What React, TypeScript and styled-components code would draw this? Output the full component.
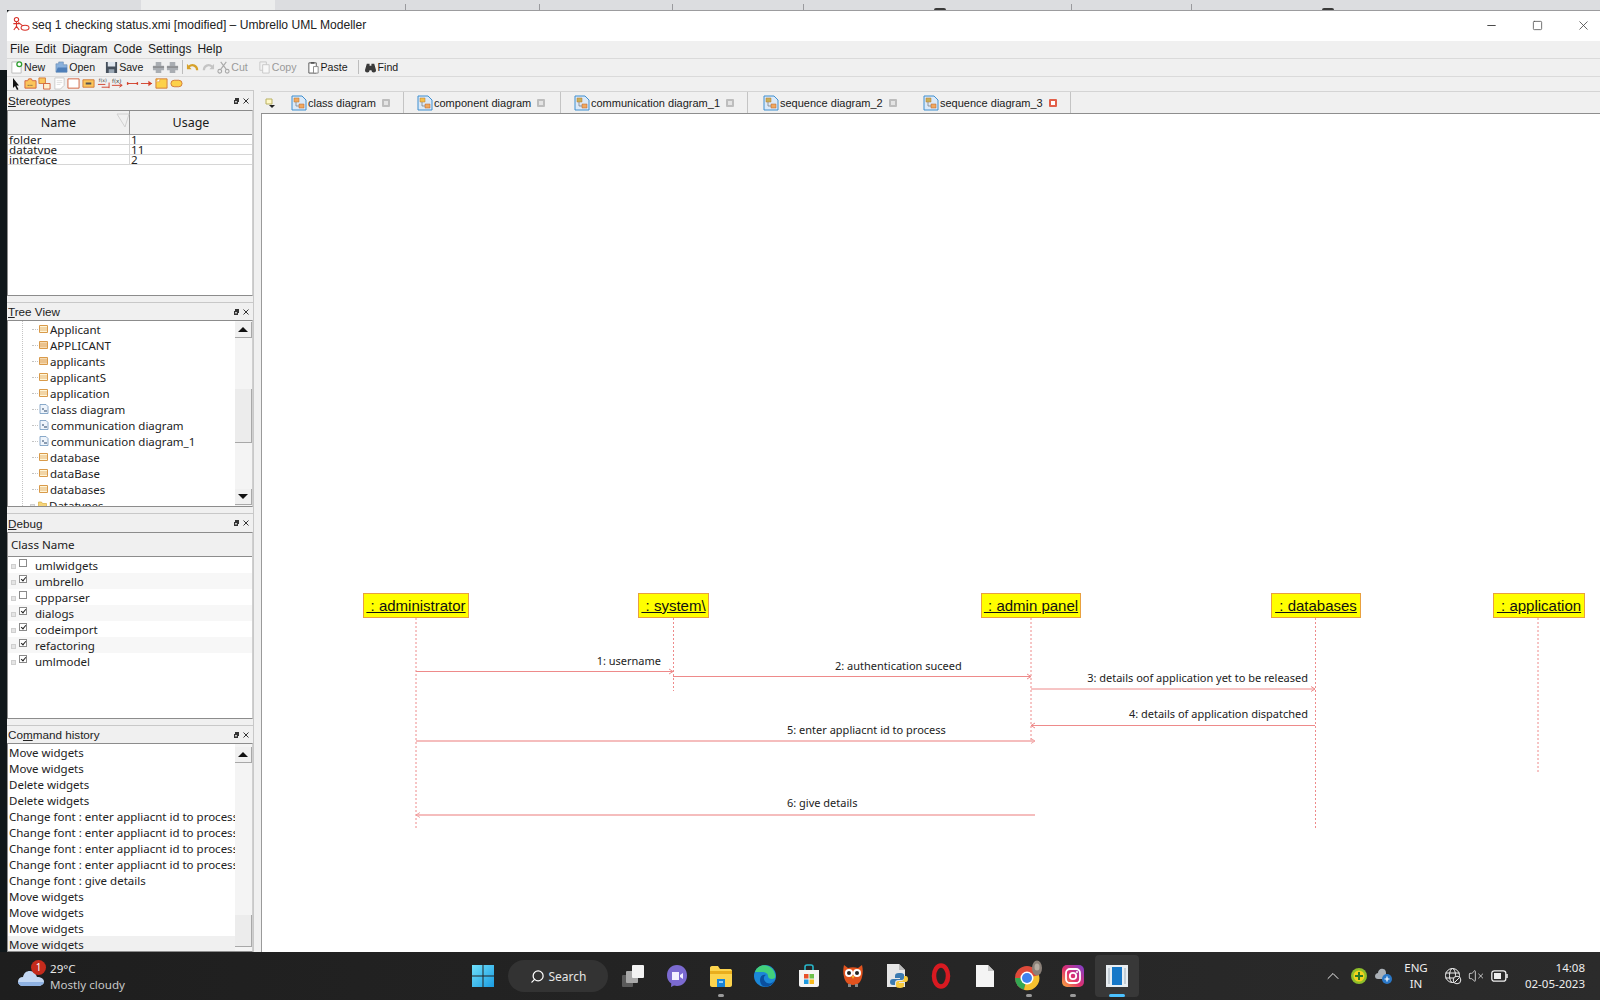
import React from "react";
import styled, { createGlobalStyle } from "styled-components";
import { ChevronUp, VolumeX, Search, Minus, Square, X } from "lucide-react";

const UI = `"Noto Sans", "DejaVu Sans", sans-serif`;
const NARROW = `"Liberation Sans", Arial, sans-serif`;

const Global = createGlobalStyle`
  html, body { margin: 0; padding: 0; background: #10171a; }
  * { box-sizing: border-box; }
`;

const Page = styled.div`
  width: 1600px; height: 1000px; display: flex; flex-direction: column;
  overflow: hidden; font-family: ${UI}; font-size: 12px; color: #1a1a1a;
`;
const BackStrip = styled.div`
  height: 10px; flex: none; background: #dcdde0; display: flex; align-items: flex-end;
`;
const Bump = styled.div`
  width: 134px; height: 10px; margin-left: 141px; background: #eceded;
`;
const Tick = styled.i<{ $ml: number; $dark?: boolean }>`
  display: block; margin-left: ${p => p.$ml}px;
  width: ${p => (p.$dark ? 12 : 1)}px; height: ${p => (p.$dark ? 2 : 6)}px;
  background: ${p => (p.$dark ? "#3a3a3a" : "#9a9a9e")};
  border-radius: ${p => (p.$dark ? "6px 6px 0 0" : 0)};
`;
const Middle = styled.div`display: flex; flex: 1; min-height: 0;`;
const Gutter = styled.div`
  width: 7px; flex: none; background: linear-gradient(#dcdde0 0 60px, #10171a 60px);
`;
const Win = styled.div`
  flex: 1; min-width: 0; display: flex; flex-direction: column; background: #f0f0f0;
  border-top: 1px solid #9c9c9e; border-top-left-radius: 4px; overflow: hidden;
`;
const TitleBar = styled.div`
  height: 30px; flex: none; background: #fff; display: flex; align-items: center; padding: 0 0 2px 5px;
`;
const TitleText = styled.span`font: 12.1px ${NARROW}; margin-left: 2px; color: #222; white-space: nowrap;`;
const WinControls = styled.div`margin-left: auto; margin-right: -6px; display: flex; align-items: center; color: #333;`;
const WinBtn = styled.span`width: 46px; display: flex; justify-content: center; align-items: center;`;
const MenuBar = styled.div`
  height: 18px; flex: none; display: flex; align-items: center; padding: 0 0 1px 3px; gap: 6px;
  border-bottom: 1px solid #dadada; font: 12px ${NARROW}; white-space: nowrap;
`;
const MainTools = styled.div`
  height: 18px; flex: none; display: flex; align-items: center; padding: 0 0 1px 3px;
  border-bottom: 1px solid #dadada; font: 10.6px ${NARROW}; white-space: nowrap;
`;
const Tool = styled.span<{ $ml?: number; $off?: boolean }>`
  display: flex; align-items: center; gap: 1px; margin-left: ${p => p.$ml ?? 0}px;
  color: ${p => (p.$off ? "#9a9a9a" : "#1a1a1a")};
`;
const Sep = styled.i<{ $ml: number }>`
  display: block; width: 1px; height: 14px; background: #bdbdbd; margin-left: ${p => p.$ml}px;
`;
const ShapeTools = styled.div`
  height: 13px; flex: none; display: flex; align-items: center; padding-left: 5px; gap: 1.6px;
  > :first-child { margin-right: 2px; }
`;
const Work = styled.div`flex: 1; min-height: 0; display: flex;`;
const Dock = styled.div`width: 246px; flex: none; display: flex; flex-direction: column;`;
const Panel = styled.section<{ $h: number }>`
  height: ${p => p.$h}px; flex: none; display: flex; flex-direction: column; overflow: hidden;
`;
const PanelTitle = styled.div<{ $h: number }>`
  height: ${p => p.$h}px; flex: none; display: flex; align-items: center; padding-left: 1px;
  border-top: 1px solid #c8c8c8; font: 11.7px ${NARROW}; color: #222;
  u { text-underline-offset: 1px; }
`;
const PanelIcons = styled.span`
  margin-left: auto; display: flex; gap: 4px; padding-right: 4px; align-items: center;
`;
const White = styled.div<{ $h?: number; $mb?: number }>`
  background: #fff; border: 1px solid #8c8c8c; border-right-color: #cfcfcf;
  width: 246px; position: relative; overflow: hidden;
  ${p => (p.$h ? `height: ${p.$h}px; flex: none;` : "flex: 1;")}
  margin-bottom: ${p => p.$mb ?? 0}px;
`;
const THead = styled.div`
  display: grid; grid-template-columns: 121px 1fr; height: 24px; background: #f0f0f0;
  border-bottom: 1px solid #9a9a9a; text-align: center; line-height: 24px; font-size: 12.5px;
  position: relative;
  > span:first-child { padding-right: 20px; }
  > span + span { border-left: 1px solid #9a9a9a; }
`;
const SortMark = styled.svg`position: absolute; left: 108px; top: 2px;`;
const TRow = styled.div`
  display: grid; grid-template-columns: 121px 1fr; height: 10px; overflow: hidden;
  border-bottom: 1px solid #d6d6d6; line-height: 10px; font-size: 11.6px; color: #222;
  > span { padding-left: 1px; height: 9px; overflow: hidden; }
  > span + span { border-left: 1px solid #d6d6d6; padding-left: 1px; }
`;
const ListRow = styled.div<{ $pl: number; $alt?: boolean; $sel?: boolean }>`
  height: 16px; display: flex; align-items: center; padding-left: ${p => p.$pl}px; white-space: nowrap;
  font-size: 11.5px; color: #222;
  background: ${p => (p.$sel ? "#f0f0f0" : p.$alt ? "#f7f7f7" : "transparent")};
`;
const ListBody = styled.div`width: 228px; overflow: hidden; height: 100%;`;
const Scroll = styled.div`
  position: absolute; top: 0; right: 0; bottom: 0; width: 17px; background: #f4f4f4;
  display: flex; flex-direction: column;
`;
const ScrollBtn = styled.div<{ $mt?: number }>`
  height: 16px; flex: none; margin-top: ${p => p.$mt ?? 0}px; background: #f0f0f0;
  border-bottom: 1px solid #a8a8a8; border-right: 1px solid #a8a8a8;
  display: flex; align-items: center; justify-content: center;
`;
const Thumb = styled.div<{ $top: number; $h: number }>`
  flex: none; margin-top: ${p => p.$top}px; height: ${p => p.$h}px; background: #ececec;
  border-bottom: 1px solid #a8a8a8; border-right: 1px solid #a8a8a8;
`;
const Arrow = styled.i<{ $down?: boolean }>`
  display: block; width: 0; height: 0; border-left: 5px solid transparent; border-right: 5px solid transparent;
  ${p => (p.$down ? "border-top: 5px solid #111;" : "border-bottom: 5px solid #111;")}
`;
const TreeGuide = styled.i`
  position: absolute; left: 14px; top: 0; bottom: 0; width: 0; border-left: 1px dotted #c4c4c4;
`;
const Stub = styled.i`display: block; width: 6px; border-top: 1px dotted #c4c4c4; margin-right: 1px;`;
const RowIcon = styled.span`display: flex; margin-right: 2px;`;
const Expander = styled.i`
  display: block; width: 5px; height: 5px; background: #e4e4e4; border: 1px solid #cfcfcf; margin-right: 3px; margin-top: 2px;
`;
const Check = styled.i<{ $on?: boolean }>`
  display: block; width: 8px; height: 8px; border: 1px solid #8a8a8a; margin-right: 8px; margin-top: -4px;
  background: #fff; position: relative;
  ${p => p.$on && `
    &::after {
      content: ""; position: absolute; left: 1.5px; top: 0; width: 2px; height: 4px;
      border: solid #222; border-width: 0 1.3px 1.3px 0; transform: rotate(40deg);
    }
  `}
`;
const ColHead = styled.div`
  height: 24px; flex: none; background: #f0f0f0; border-bottom: 1px solid #8c8c8c;
  padding-left: 3px; line-height: 24px; font-size: 11.6px;
`;
const Splitter = styled.div`
  width: 8px; flex: none; border-left: 1px solid #c8c8c8;
`;
const Editor = styled.div`flex: 1; min-width: 0; display: flex; flex-direction: column;`;
const TabBar = styled.div`
  height: 23px; flex: none; display: flex; align-items: center; border-top: 1px solid #d4d4d4;
  border-bottom: 1px solid #8e8e8e; margin-top: 1px; font: 11px ${NARROW}; white-space: nowrap;
`;
const NewTab = styled.span`width: 28px; flex: none; padding-left: 4px; display: flex;`;
const TabItem = styled.div<{ $w: number; $sep?: boolean }>`
  width: ${p => p.$w}px; flex: none; height: 100%; display: flex; align-items: center; gap: 1px;
  border-right: ${p => (p.$sep ? "1px solid #c4c4c4" : "none")};
`;
const TabClose = styled.i<{ $on?: boolean }>`
  display: block; width: 8px; height: 8px; margin-left: 5px; border-radius: 1px;
  background: ${p => (p.$on ? "#fff" : "#e4e4e4")};
  border: ${p => (p.$on ? "2px solid #e2604a" : "2px solid #bdbdbd")};
`;
const TabLead = styled.i<{ $w: number }>`display: block; width: ${p => p.$w}px; flex: none;`;
const Canvas = styled.div`
  flex: 1; position: relative; background: #fff; border-left: 1px solid #9a9a9a; overflow: hidden;
`;
const CanvasLines = styled.svg`position: absolute; left: 0; top: 0; width: 100%; height: 100%;`;
const OX = 262, OY = 114;
const ObjBox = styled.div<{ $x: number; $w: number }>`
  position: absolute; left: ${p => p.$x - OX}px; top: ${593 - OY}px; width: ${p => p.$w}px; height: 25px;
  background: #ffff00; border: 1px solid #e8a040; display: flex; align-items: center; justify-content: center;
  font: 15px/1 "Liberation Sans", Arial, sans-serif; color: #111; text-decoration: underline; white-space: pre;
`;
const MsgLabel = styled.span<{ $x: number; $y: number; $right?: boolean }>`
  position: absolute; top: ${p => p.$y - OY - 8}px; line-height: 16px; font-size: 11px; color: #222; white-space: nowrap;
  ${p => (p.$right ? `right: ${1600 - p.$x}px;` : `left: ${p.$x - OX}px;`)}
`;

const Taskbar = styled.footer`
  height: 48px; flex: none; background: linear-gradient(90deg, #1e1e1e, #262626 60%, #2b2b2b);
  display: flex; align-items: center; color: #eee; position: relative; font-family: ${UI};
`;
const Weather = styled.div`width: 461px; flex: none; display: flex; align-items: center; padding-left: 18px; gap: 6px; position: relative;`;
const Badge = styled.span`
  position: absolute; left: 31px; top: 0; width: 15px; height: 15px; border-radius: 50%; background: #c42b1c;
  font-size: 10px; line-height: 15px; text-align: center; color: #fff;
`;
const WeatherText = styled.div`font-size: 11.6px; line-height: 16px; padding-top: 1px; display: flex; flex-direction: column; color: #e8e8e8; & > span + span { color: #c8c8c8; }`;
const Slot = styled.div<{ $active?: boolean }>`
  width: 44px; height: 42px; flex: none; display: flex; align-items: center; justify-content: center;
  position: relative; border-radius: 4px;
  background: ${p => (p.$active ? "#383838" : "transparent")};
`;
const Dot = styled.i<{ $wide?: boolean }>`
  position: absolute; bottom: 0; left: 50%; transform: translateX(-50%);
  width: ${p => (p.$wide ? 16 : 6)}px; height: 3px; border-radius: 2px;
  background: ${p => (p.$wide ? "#4cc2ff" : "#9a9a9a")};
`;
const SearchPill = styled.div`
  width: 100px; height: 32px; margin: 0 3px; flex: none; border-radius: 16px; background: #333;
  display: flex; align-items: center; justify-content: center; gap: 4px; font-size: 12px; color: #e6e6e6;
`;
const Tray = styled.div`margin-left: auto; display: flex; align-items: center; padding-right: 15px;`;
const TrayIcon = styled.span<{ $w: number }>`width: ${p => p.$w}px; display: flex; justify-content: center;`;
const Lang = styled.div`width: 34px; margin: 0 8px 0 3px; text-align: center; font-size: 11.5px; line-height: 16px;`;
const Clock = styled.div`width: 72px; text-align: right; font-size: 11.5px; line-height: 16px; margin-left: 1px;`;

/* ---------- small app icons ---------- */
const S = ({ w = 13, h = 13, vb = "0 0 14 14", children }: any) => (
  <svg width={w} height={h} viewBox={vb} style={{ flex: "none", display: "block" }}>{children}</svg>
);
const AppLogo = () => (
  <svg width={18} height={18} viewBox="0 0 20 20" style={{ flex: "none" }}>
    <g fill="none" stroke="#d8322a" strokeWidth="1.2">
      <circle cx="5" cy="4" r="2.4" />
      <path d="M5 6.5v5M1.5 8.5h7M5 11.5l-3 4M5 11.5l3 4M7 7l5 4" />
      <ellipse cx="14.5" cy="13" rx="4.4" ry="2.8" />
    </g>
  </svg>
);
const NewIc = () => <S><path d="M2 1h7l3 3v9H2z" fill="#fff" stroke="#bbb" /><circle cx="10" cy="3.5" r="2.6" fill="#fff" stroke="#2f9e2f" strokeWidth="1.4" /></S>;
const OpenIc = () => <S><path d="M1 12V3h3V1h5v3h4v8z" fill="#8ab1dc" stroke="#6084ad" strokeWidth=".6" /><path d="M1 12l2-5h10v5z" fill="#4f7fb9" /></S>;
const SaveIc = () => <S><path d="M1 1h12v12H1z" fill="#46505c" /><path d="M3 1h8v5H3z" fill="#dfe6ee" /><path d="M4 9h6v4H4z" fill="#9aa7b4" /></S>;
const PrintIc = () => <S><path d="M4 1h6v4H4zM1 5h12v5H1zM4 9h6v4H4z" fill="#a9adb2" /><path d="M1 6.5h12" stroke="#777" /></S>;
const UndoIc = ({ on }: { on?: boolean }) => <S><path d={on ? "M12 10C12 5 7 3 3 6" : "M2 10C2 5 7 3 11 6"} fill="none" stroke={on ? "#d6a12a" : "#c4c4c4"} strokeWidth="2.4" /><path d={on ? "M1 3v6h5z" : "M13 3v6H8z"} fill={on ? "#d6a12a" : "#c4c4c4"} /></S>;
const CutIc = () => <S><g fill="none" stroke="#aaa" strokeWidth="1.2"><circle cx="3" cy="11" r="2" /><circle cx="11" cy="11" r="2" /><path d="M4 9l6-8M10 9L4 1" /></g></S>;
const CopyIc = () => <S><path d="M2 1h7v9H2z" fill="#f2f2f2" stroke="#c8c8c8" /><path d="M5 4h7v9H5z" fill="#f8f8f8" stroke="#c8c8c8" /></S>;
const PasteIc = () => <S><path d="M2 2h8v11H2z" fill="#fff" stroke="#555" /><path d="M4 1h4v2H4z" fill="#555" /><path d="M7 6h5v7H7z" fill="#fff" stroke="#888" /></S>;
const FindIc = () => <S><path d="M1 10l2-7h3v2h2V3h3l2 7a2.5 2.5 0 0 1-5 0H6a2.5 2.5 0 0 1-5 0z" fill="#3b3b3b" /></S>;
const ClassIc = ({ alt }: { alt?: boolean }) => <S w={9} h={10} vb="0 0 9 10"><path d="M.5 1.5h8v7h-8z" fill={alt ? "#f5d9b0" : "#fff6d8"} stroke="#d99a4a" /><path d="M.5 4h8M.5 6h8" stroke="#d99a4a" strokeWidth=".7" /></S>;
const FolderSm = () => <S w={9} h={10} vb="0 0 9 10"><path d="M.5 2h3l1 1.500h4v6h-8z" fill="#f5d479" stroke="#d8ad44" strokeWidth=".7" /></S>;
const DiagIc = () => <S w={10} h={10} vb="0 0 10 10"><path d="M1 .5h6l2 2v7H1z" fill="#eef4fb" stroke="#6f95bc" strokeWidth=".8" /><path d="M3 4h2v2H3zM5 6h3v2H5z" fill="#8a9bb0" /></S>;
const TabIc = ({ tone }: { tone: string }) => (
  <S w={16} h={16} vb="0 0 16 16">
    <path d="M1 1h10l4 4v10H1z" fill="#dbe9f7" stroke="#3f8fd0" />
    <path d="M3 3h5v4H3z" fill={tone} stroke="#b5762f" strokeWidth=".5" />
    <path d="M8 9h5v4H8z" fill="#f0a860" stroke="#b5622f" strokeWidth=".5" />
    <path d="M5 7v4h3" fill="none" stroke="#777" strokeWidth=".7" />
  </S>
);
const Pin = () => <svg width={5} height={6} viewBox="0 0 5 6"><path d="M1 0h4v4H4v2H0V2h1z" fill="#333" /><path d="M1.2 3h1.6v1.6H1.2z" fill="#eee" /></svg>;
const Close = () => <svg width={6} height={6} viewBox="0 0 6 6"><path d="M.5.5l5 5M5.5.5l-5 5" stroke="#333" /></svg>;
const Title = ({ children, h }: any) => <PanelTitle $h={h}><span>{children}</span><PanelIcons><Pin /><Close /></PanelIcons></PanelTitle>;

const shapeIcons = [
  <svg key="a" width={8} height={12} viewBox="0 0 8 12"><path d="M1 0v10l2-2 2 4 1.500-.7-2-3.800H7z" fill="#111" /></svg>,
  <S key="b"><path d="M1 4h3l1-2h3l1 2h4v8H1z" fill="#fbc55a" stroke="#d2603a" /><path d="M4 9h6" stroke="#444" strokeDasharray="1 1" /></S>,
  <S key="c"><path d="M1 1h7v6H1z" fill="#fbc55a" stroke="#d27a3a" /><path d="M6 7h7v6H6z" fill="#fff0d0" stroke="#d2603a" /></S>,
  <S key="d"><path d="M2 1h10v8l-4 4H2z" fill="#fff" stroke="#c8c8c8" /><path d="M4 4h6M4 6h6M4 8h4" stroke="#ddd" /></S>,
  <S key="e"><path d="M1 2h12v10H1z" fill="#fff" stroke="#d2603a" /></S>,
  <S key="f"><path d="M1 3h12v8H1z" fill="#fbc55a" stroke="#d27a3a" /><path d="M4 6h6v2H4z" fill="#555" /></S>,
  <S key="g"><text x="2" y="5" fontSize="5" fill="#333" fontFamily="DejaVu Sans">f(x)</text><path d="M1 8h8M5 11h8M13 6v6" stroke="#d2402a" fill="none" /></S>,
  <S key="h"><text x="1" y="6" fontSize="6" fill="#333" fontFamily="DejaVu Sans">f(x)</text><path d="M1 9h11M9 7l3 2-3 2" stroke="#d2402a" fill="none" /></S>,
  <S key="i"><path d="M1 7h12" stroke="#d2402a" /><path d="M1 5v4l3-2zM13 5v4l-3-2z" fill="#d2402a" /></S>,
  <S key="j"><path d="M1 7h12" stroke="#d2402a" /><path d="M9 4v6l4-3z" fill="#d2402a" /></S>,
  <S key="k"><path d="M1 2h12v10H1z" fill="#fcd14a" stroke="#d27a3a" /><path d="M1 5h4V2" fill="#fff" stroke="#d27a3a" strokeWidth=".5" /></S>,
  <S key="l"><rect x="1" y="3.500" width="12" height="7" rx="3.500" fill="#fcd14a" stroke="#d27a3a" /></S>,
];

const treeRows: [string, boolean?, boolean?][] = [
  ["Applicant"], ["APPLICANT", false, true], ["applicants", false, true], ["applicantS"], ["application"],
  ["class diagram", true], ["communication diagram", true], ["communication diagram_1", true],
  ["database"], ["dataBase"], ["databases"],
];
const debugRows: [string, boolean][] = [
  ["umlwidgets", false], ["umbrello", true], ["cppparser", false], ["dialogs", true],
  ["codeimport", true], ["refactoring", true], ["umlmodel", true],
];
const enter = "Change font : enter appliacnt id to process";
const history = [
  "Move widgets", "Move widgets", "Delete widgets", "Delete widgets", enter, enter, enter, enter,
  "Change font : give details", "Move widgets", "Move widgets", "Move widgets", "Move widgets",
];
const tabs = [
  { t: "class diagram", w: 115, lead: 1, tone: "#f0a860", sep: true },
  { t: "component diagram", w: 157, lead: 12, tone: "#f5c04a", sep: true },
  { t: "communication diagram_1", w: 187, lead: 12, tone: "#c8b05a", sep: true },
  { t: "sequence diagram_2", w: 159, lead: 14, tone: "#c8b05a" },
  { t: "sequence diagram_3", w: 164, lead: 15, tone: "#c8b05a", on: true, sep: true },
];
const objs = [
  { n: " : administrator", x: 363, w: 106, life: 416, end: 829 },
  { n: " : system\\", x: 638, w: 71, life: 673.5, end: 691 },
  { n: " : admin panel", x: 981, w: 100, life: 1031, end: 741 },
  { n: " : databases", x: 1271, w: 90, life: 1315.5, end: 829 },
  { n: " : application", x: 1493, w: 92, life: 1538, end: 772 },
];
const msgs = [
  { y: 671.5, a: 416, b: 673 }, { y: 676.5, a: 673, b: 1031 }, { y: 689, a: 1031, b: 1315 },
  { y: 725.5, a: 1315, b: 1031 }, { y: 741, a: 416, b: 1035, soft: true }, { y: 815, a: 1035, b: 416, soft: true },
];
const labels = [
  { t: "1: username", x: 661, y: 661, right: true },
  { t: "2: authentication suceed", x: 835, y: 666 },
  { t: "3: details oof application yet to be released", x: 1308, y: 678, right: true },
  { t: "4: details of application dispatched", x: 1308, y: 714, right: true },
  { t: "5: enter appliacnt id to process", x: 787, y: 730 },
  { t: "6: give details", x: 787, y: 803 },
];

/* ---------- taskbar icons ---------- */
const WinLogo = () => <svg width={24} height={24} viewBox="0 0 24 24"><defs><linearGradient id="w" x1="0" y1="0" x2="1" y2="1"><stop offset="0" stopColor="#6fe0fb" /><stop offset="1" stopColor="#1a9be0" /></linearGradient></defs><path d="M1 1h10.500v10.500H1zM12.500 1H23v10.500H12.500zM1 12.500h10.500V23H1zM12.500 12.500H23V23H12.500z" fill="url(#w)" /></svg>;
const TaskView = () => <svg width={24} height={24} viewBox="0 0 24 24"><rect x="1" y="11" width="11" height="12" rx="1" fill="#5a5a5a" /><rect x="5" y="7" width="12" height="12" rx="1" fill="#a8a8a8" /><rect x="11" y="1" width="12" height="13" rx="1" fill="#f2f2f2" /></svg>;
const Teams = () => <svg width={24} height={24} viewBox="0 0 24 24"><path d="M12 1c6 0 10 4.500 10 10.500S18 22 12 22c-1 0-2 0-3-.4L6 23l.3-3.400C3.500 17.500 2 15 2 11.500 2 5.500 6 1 12 1z" fill="#7b6ad0" /><path d="M7 8h7v8H7zM15 11l3-2v6l-3-2z" fill="#f3f0ff" /></svg>;
const Folder = () => <svg width={24} height={24} viewBox="0 0 24 24"><path d="M1 4c0-1 .5-2 2-2h6l2 3h10c1 0 2 .5 2 2v14c0 1-1 2-2 2H3c-1 0-2-1-2-2z" fill="#fcd34d" /><path d="M1 7h22v3H1z" fill="#e9ae1e" /><path d="M8 15h8v8H8z" fill="#1683d8" /><path d="M10 17h4v2h-4z" fill="#8fd0fb" /></svg>;
const Edge = () => <svg width={24} height={24} viewBox="0 0 24 24"><circle cx="12" cy="12" r="11" fill="#1b87d8" /><path d="M2 8C4 2 10 0 15 2c5 2 8 7 7 12-3 2-7 1-7-2 0-3-3-4-6-4-3 0-5 0-7 0z" fill="#42d07c" /><path d="M7 16c0-4 3-6 6-5-3 1-3 6 1 8 3 1 6 0 8-3-2 5-8 8-12 6-2-1-3-4-3-6z" fill="#0a4f9e" /></svg>;
const Store = () => <svg width={24} height={24} viewBox="0 0 24 24"><path d="M2 6h20v15c0 1-1 2-2 2H4c-1 0-2-1-2-2z" fill="#f4f4f4" /><path d="M8 6V3c0-1 1-2 2-2h4c1 0 2 1 2 2v3" fill="none" stroke="#27b6c9" strokeWidth="1.600" /><path d="M7 10h4.500v4.500H7z" fill="#e8502a" /><path d="M12.500 10H17v4.500h-4.500z" fill="#6cc04a" /><path d="M7 15.500h4.500V20H7z" fill="#1e9ae0" /><path d="M12.500 15.500H17V20h-4.500z" fill="#f7b91d" /></svg>;
const Owl = () => <svg width={24} height={26} viewBox="0 0 24 26"><path d="M3 2l4 3c3-1 7-1 10 0l4-3c1 4 1 8 0 12-1 5-4 8-9 8s-8-3-9-8C2 10 2 6 3 2z" fill="#e2531e" /><circle cx="8" cy="10" r="4" fill="#fff" /><circle cx="16" cy="10" r="4" fill="#fff" /><circle cx="8" cy="10" r="2" fill="#222" /><circle cx="16" cy="10" r="2" fill="#222" /><path d="M10.500 13h3l-1.500 3z" fill="#f5b82e" /><path d="M7 21h3v3H7zM14 21h3v3h-3z" fill="#888" /></svg>;
const PyFile = () => <svg width={24} height={26} viewBox="0 0 24 26"><path d="M2 1h12l6 6v17H2z" fill="#e6e6e6" /><path d="M14 1v6h6z" fill="#bcbcbc" /><path d="M14 10c-3 0-4 1-4 3v2h5v1H8c-2 0-3 1-3 3s1 3 3 3h2v-2c0-2 1-3 3-3h4c1 0 2-1 2-2v-3c0-1-1-2-3-2z" fill="#3b7ab0" /><path d="M15 25c3 0 4-1 4-3v-2h-5v-1h7c1 0 2-1 2-3s-1-3-2-3h-2v2c0 2-1 3-3 3h-3c-1 0-2 1-2 2v3c0 1 1 2 4 2z" fill="#f7ca3e" /></svg>;
const Opera = () => <svg width={22} height={26} viewBox="0 0 22 26"><ellipse cx="11" cy="13" rx="7" ry="10.500" fill="none" stroke="#d81a21" strokeWidth="4.500" /></svg>;
const FileIc = () => <svg width={20} height={24} viewBox="0 0 20 24"><path d="M1 1h12l6 6v16H1z" fill="#f4f4f4" /><path d="M13 1v6h6z" fill="#c4c4c4" /></svg>;
const Chrome = () => <svg width={30} height={32} viewBox="0 0 30 32"><circle cx="13" cy="18" r="12" fill="#dd4a3a" /><path d="M13 18l-12 0a12 12 0 0 0 9 11.700z" fill="#34a853" /><path d="M13 18l-3 11.700A12 12 0 0 0 25 15z" fill="#f6c12f" /><circle cx="13" cy="18" r="6.500" fill="#fff" /><circle cx="13" cy="18" r="5" fill="#3f82ee" /><ellipse cx="23" cy="8" rx="5" ry="7.500" fill="#8a8078" /><ellipse cx="23" cy="7" rx="2.500" ry="3.500" fill="#b5aca2" /></svg>;
const Insta = () => <svg width={24} height={24} viewBox="0 0 24 24"><defs><linearGradient id="ig" x1="0" y1="1" x2="1" y2="0"><stop offset="0" stopColor="#fbb03b" /><stop offset=".45" stopColor="#e1306c" /><stop offset="1" stopColor="#7a3fd0" /></linearGradient></defs><rect x="1" y="1" width="22" height="22" rx="5" fill="url(#ig)" /><rect x="5" y="5" width="14" height="14" rx="4" fill="none" stroke="#fff" strokeWidth="1.800" /><circle cx="12" cy="12" r="3.200" fill="none" stroke="#fff" strokeWidth="1.800" /><circle cx="16" cy="8" r="1" fill="#fff" /></svg>;
const UmbrelloTask = () => <svg width={24} height={24} viewBox="0 0 24 24"><path d="M1 1h22v22H1z" fill="#e8eef2" /><path d="M7 3h10v18H7z" fill="#1678c8" /><path d="M3 4h2v16H3zM19 4h2v16h-2z" fill="#c4ced6" /></svg>;
const GreenBall = () => <svg width={18} height={18} viewBox="0 0 18 18"><circle cx="9" cy="9" r="8" fill="#8fbf2a" /><circle cx="9" cy="9" r="5.500" fill="#f4d21e" /><path d="M8 5h2v3h3v2h-3v3H8v-3H5V8h3z" fill="#2a7a2a" /></svg>;
const CloudSync = () => <svg width={18} height={18} viewBox="0 0 18 18"><path d="M3 12c-2 0-3-1-3-3s2-3 3-3c0-3 3-5 5-4 2 0 3 2 3 4v6z" fill="#aab0b6" /><circle cx="12" cy="12" r="5" fill="#2a78c8" /><path d="M9.500 12h5M12 9.500v5" stroke="#fff" strokeWidth="1.200" /></svg>;
const GlobeOff = () => <svg width={18} height={18} viewBox="0 0 18 18" fill="none" stroke="#eee" strokeWidth="1"><circle cx="8.500" cy="8.500" r="7" /><ellipse cx="8.500" cy="8.500" rx="3" ry="7" /><path d="M1.500 6h14M1.500 11h14" /><circle cx="13" cy="13" r="3.800" fill="#2b2b2b" /><path d="M10.500 15.500l5-5" /></svg>;
const Battery = () => <svg width={18} height={12} viewBox="0 0 18 12"><rect x=".8" y=".8" width="14" height="10.400" rx="2.500" fill="none" stroke="#eee" strokeWidth="1.300" /><rect x="3" y="3" width="7" height="6" fill="#eee" /><path d="M16 4v4" stroke="#eee" strokeWidth="1.500" /></svg>;
const CloudWeather = () => <svg width={26} height={26} viewBox="0 0 26 26"><path d="M5 23c-3 0-5-2-5-4.500S2 14 5 14c1-4 3-6 7-6 4 0 6 3 7 6 4 0 7 2 7 4.500S23 23 20 23z" fill="#c3d8f3" /><path d="M5 23c-3 0-5-2-5-4h26c0 2-3 4-6 4z" fill="#8fb2e2" /></svg>;

export default function App() {
  return (
    <Page>
      <Global />
      <BackStrip>
        <Bump />
        <Tick $ml={130} /><Tick $ml={133} /><Tick $ml={132} /><Tick $ml={130} /><Tick $ml={130} $dark /><Tick $ml={125} /><Tick $ml={119} /><Tick $ml={130} $dark />
      </BackStrip>
      <Middle>
        <Gutter />
        <Win>
          <TitleBar>
            <AppLogo />
            <TitleText>seq 1 checking status.xmi [modified] – Umbrello UML Modeller</TitleText>
            <WinControls>
              <WinBtn><Minus size={13} strokeWidth={1.4} color="#111" /></WinBtn>
              <WinBtn><Square size={11} strokeWidth={1.8} color="#555" /></WinBtn>
              <WinBtn><X size={15} strokeWidth={1.3} color="#444" /></WinBtn>
            </WinControls>
          </TitleBar>
          <MenuBar>
            <span>File</span><span>Edit</span><span>Diagram</span><span>Code</span><span>Settings</span><span>Help</span>
          </MenuBar>
          <MainTools>
            <Tool><NewIc />New</Tool>
            <Tool $ml={10}><OpenIc />Open</Tool>
            <Tool $ml={10}><SaveIc />Save</Tool>
            <Tool $ml={9}><PrintIc /></Tool>
            <Tool $ml={1}><PrintIc /></Tool>
            <Sep $ml={3} />
            <Tool $ml={3}><UndoIc on /></Tool>
            <Tool $ml={3}><UndoIc /></Tool>
            <Tool $ml={2} $off><CutIc />Cut</Tool>
            <Tool $ml={10} $off><CopyIc />Copy</Tool>
            <Tool $ml={10}><PasteIc />Paste</Tool>
            <Sep $ml={10} />
            <Tool $ml={5}><FindIc />Find</Tool>
          </MainTools>
          <ShapeTools>{shapeIcons}</ShapeTools>
          <Work>
            <Dock>
              <Panel $h={212}>
                <Title h={20}><u>S</u>tereotypes</Title>
                <White $h={186} $mb={6}>
                  <THead>
                    <span>Name</span><span>Usage</span>
                    <SortMark width={14} height={15} viewBox="0 0 14 15"><path d="M1 1h12L9 14z" fill="none" stroke="#d0d0d0" /></SortMark>
                  </THead>
                  <TRow><span>folder</span><span>1</span></TRow>
                  <TRow><span>datatype</span><span>11</span></TRow>
                  <TRow><span>interface</span><span>2</span></TRow>
                </White>
              </Panel>
              <Panel $h={211}>
                <Title h={18}><u>T</u>ree View</Title>
                <White $h={187} $mb={6}>
                  <TreeGuide />
                  <ListBody>
                    {treeRows.map(([t, d, alt], i) => (
                      <ListRow key={i} $pl={24}><Stub /><RowIcon>{d ? <DiagIc /> : <ClassIc alt={alt} />}</RowIcon>{t}</ListRow>
                    ))}
                    <ListRow $pl={22}><Expander /><RowIcon><FolderSm /></RowIcon>Datatypes</ListRow>
                  </ListBody>
                  <Scroll>
                    <ScrollBtn $mt={1}><Arrow /></ScrollBtn>
                    <Thumb $top={51} $h={54} />
                    <ScrollBtn $mt={46}><Arrow $down /></ScrollBtn>
                  </Scroll>
                </White>
              </Panel>
              <Panel $h={212}>
                <Title h={19}><u>D</u>ebug</Title>
                <White $h={187} $mb={6}>
                  <ColHead>Class Name</ColHead>
                  {debugRows.map(([t, on], i) => (
                    <ListRow key={t} $pl={3} $alt={i % 2 === 1}><Expander /><Check $on={on} />{t}</ListRow>
                  ))}
                </White>
              </Panel>
              <Panel $h={227}>
                <Title h={18}>Co<u>m</u>mand history</Title>
                <White>
                  <ListBody>
                    {history.map((t, i) => <ListRow key={i} $pl={1} $sel={i === 12}>{t}</ListRow>)}
                  </ListBody>
                  <Scroll>
                    <ScrollBtn $mt={3}><Arrow /></ScrollBtn>
                    <Thumb $top={152} $h={32} />
                  </Scroll>
                </White>
              </Panel>
            </Dock>
            <Splitter />
            <Editor>
              <TabBar>
                <NewTab>
                  <S w={10} h={10} vb="0 0 10 10"><path d="M1 1h6v5H1z" fill="#fff8c8" stroke="#b8b060" /><path d="M4 7h6L7 10z" fill="#222" /></S>
                </NewTab>
                {tabs.map(x => (
                  <TabItem key={x.t} $w={x.w} $sep={x.sep}>
                    <TabLead $w={x.lead} /><TabIc tone={x.tone} />{x.t}<TabClose $on={x.on} />
                  </TabItem>
                ))}
              </TabBar>
              <Canvas>
                <CanvasLines>
                  <g stroke="#ee8a8a" fill="none">
                    {objs.map(o => <path key={o.n} d={`M${o.life - OX} ${618 - OY}V${o.end - OY}`} strokeDasharray="2 2" />)}
                    {msgs.map((m, i) => {
                      const d = m.b > m.a ? -4 : 4;
                      return (
                        <g key={i} strokeWidth={m.soft ? 1.4 : 1} opacity={m.soft ? .75 : 1}>
                          <path d={`M${m.a - OX} ${m.y - OY}H${m.b - OX}`} />
                          <path d={`M${m.b - OX + d} ${m.y - OY - 2.5}L${m.b - OX} ${m.y - OY}L${m.b - OX + d} ${m.y - OY + 2.5}`} strokeWidth={1} />
                        </g>
                      );
                    })}
                  </g>
                </CanvasLines>
                {objs.map(o => <ObjBox key={o.n} $x={o.x} $w={o.w}>{o.n}</ObjBox>)}
                {labels.map(l => <MsgLabel key={l.t} $x={l.x} $y={l.y} $right={l.right}>{l.t}</MsgLabel>)}
              </Canvas>
            </Editor>
          </Work>
        </Win>
      </Middle>
      <Taskbar>
        <Weather>
          <CloudWeather />
          <Badge>1</Badge>
          <WeatherText><span>29°C</span><span>Mostly cloudy</span></WeatherText>
        </Weather>
        <Slot><WinLogo /></Slot>
        <SearchPill><Search size={15} color="#fff" style={{ transform: "scaleX(-1)" }} />Search</SearchPill>
        <Slot><TaskView /></Slot>
        <Slot><Teams /></Slot>
        <Slot><Folder /><Dot /></Slot>
        <Slot><Edge /></Slot>
        <Slot><Store /></Slot>
        <Slot><Owl /></Slot>
        <Slot><PyFile /></Slot>
        <Slot><Opera /></Slot>
        <Slot><FileIc /></Slot>
        <Slot><Chrome /><Dot /></Slot>
        <Slot><Insta /><Dot /></Slot>
        <Slot $active><UmbrelloTask /><Dot $wide /></Slot>
        <Tray>
          <TrayIcon $w={26}><ChevronUp size={20} strokeWidth={1.2} color="#eee" /></TrayIcon>
          <TrayIcon $w={25}><GreenBall /></TrayIcon>
          <TrayIcon $w={25}><CloudSync /></TrayIcon>
          <Lang>ENG<br />IN</Lang>
          <TrayIcon $w={24}><GlobeOff /></TrayIcon>
          <TrayIcon $w={22}><VolumeX size={16} strokeWidth={1.2} color="#eee" /></TrayIcon>
          <TrayIcon $w={25}><Battery /></TrayIcon>
          <Clock>14:08<br />02-05-2023</Clock>
        </Tray>
      </Taskbar>
    </Page>
  );
}
